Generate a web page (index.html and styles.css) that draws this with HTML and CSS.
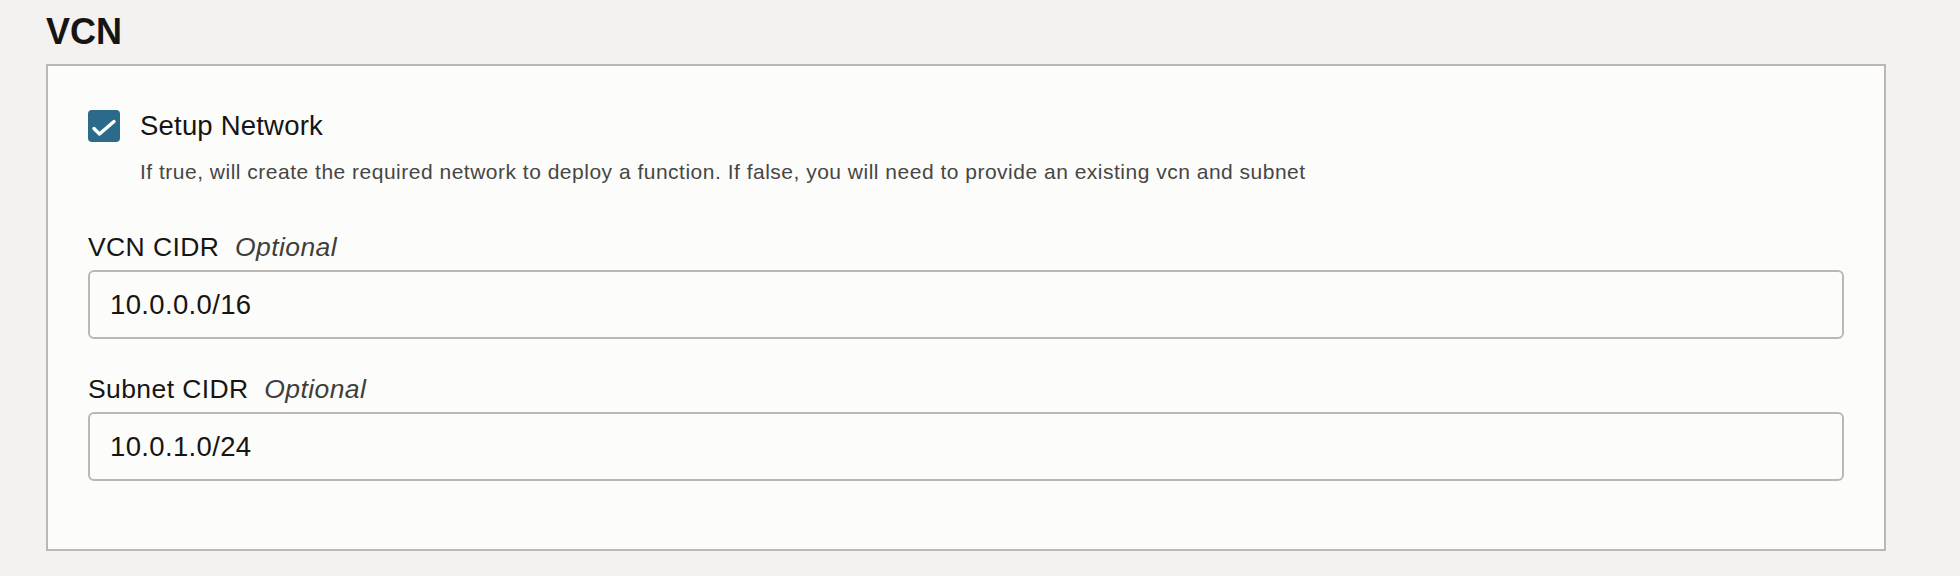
FILE: index.html
```html
<!DOCTYPE html>
<html lang="en">
<head>
<meta charset="utf-8">
<title>VCN</title>
<link rel="stylesheet" href="styles.css">
</head>
<body>
<div class="page">
  <h2 class="section-title">VCN</h2>
  <div class="panel">
    <div class="check-row">
      <span class="checkbox">
        <svg viewBox="0 0 32 32" width="32" height="32" aria-hidden="true"><path d="M6 18.5 L11.5 24 L26 11.5" fill="none" stroke="#ffffff" stroke-width="3.4" stroke-linecap="round" stroke-linejoin="round"/></svg>
      </span>
      <span class="check-label">Setup Network</span>
    </div>
    <div class="help">If true, will create the required network to deploy a function. If false, you will need to provide an existing vcn and subnet</div>
    <div class="field field-first">
      <div class="label">VCN CIDR <span class="optional">Optional</span></div>
      <input class="text-input" type="text" value="10.0.0.0/16">
    </div>
    <div class="field">
      <div class="label">Subnet CIDR <span class="optional">Optional</span></div>
      <input class="text-input" type="text" value="10.0.1.0/24">
    </div>
  </div>
</div>
</body>
</html>
```

FILE: styles.css
```css
html, body {
  margin: 0;
  padding: 0;
  background: #f3f2f1;
  font-family: "Liberation Sans", Arial, sans-serif;
  color: #161513;
}

.page {
  padding: 10px 74px 0 46px;
}

.section-title {
  margin: 0 0 10px 0;
  font-size: 36px;
  line-height: 44px;
  font-weight: 700;
  color: #161513;
}

.panel {
  border: 2px solid #bcb8b1;
  background: #fcfcfb;
  padding: 44px 40px 68px 40px;
}

.check-row {
  display: flex;
  align-items: center;
  gap: 20px;
  height: 32px;
}

.checkbox {
  width: 32px;
  height: 32px;
  border-radius: 4px;
  background: #2c6a8c;
  display: flex;
  flex: none;
}

.check-label {
  font-size: 27.5px;
  line-height: 32px;
  letter-spacing: 0.2px;
  color: #161513;
}

.help {
  margin: 18px 0 0 52px;
  font-size: 21px;
  line-height: 24px;
  letter-spacing: 0.5px;
  color: #474644;
}

.field {
  margin-top: 34px;
}

.field-first {
  margin-top: 47px;
}

.label {
  font-size: 26.5px;
  line-height: 32px;
  letter-spacing: 0.4px;
  color: #161513;
}

.optional {
  margin-left: 8px;
  font-style: italic;
  color: #3f3e3c;
}

.text-input {
  display: block;
  box-sizing: border-box;
  width: 100%;
  height: 69px;
  margin-top: 7px;
  padding: 0 20px;
  border: 2px solid #bcb8b1;
  border-radius: 6px;
  background: #fcfcfb;
  font-family: "Liberation Sans", Arial, sans-serif;
  font-size: 27.5px;
  letter-spacing: 0.35px;
  color: #161513;
  outline: none;
}
```
